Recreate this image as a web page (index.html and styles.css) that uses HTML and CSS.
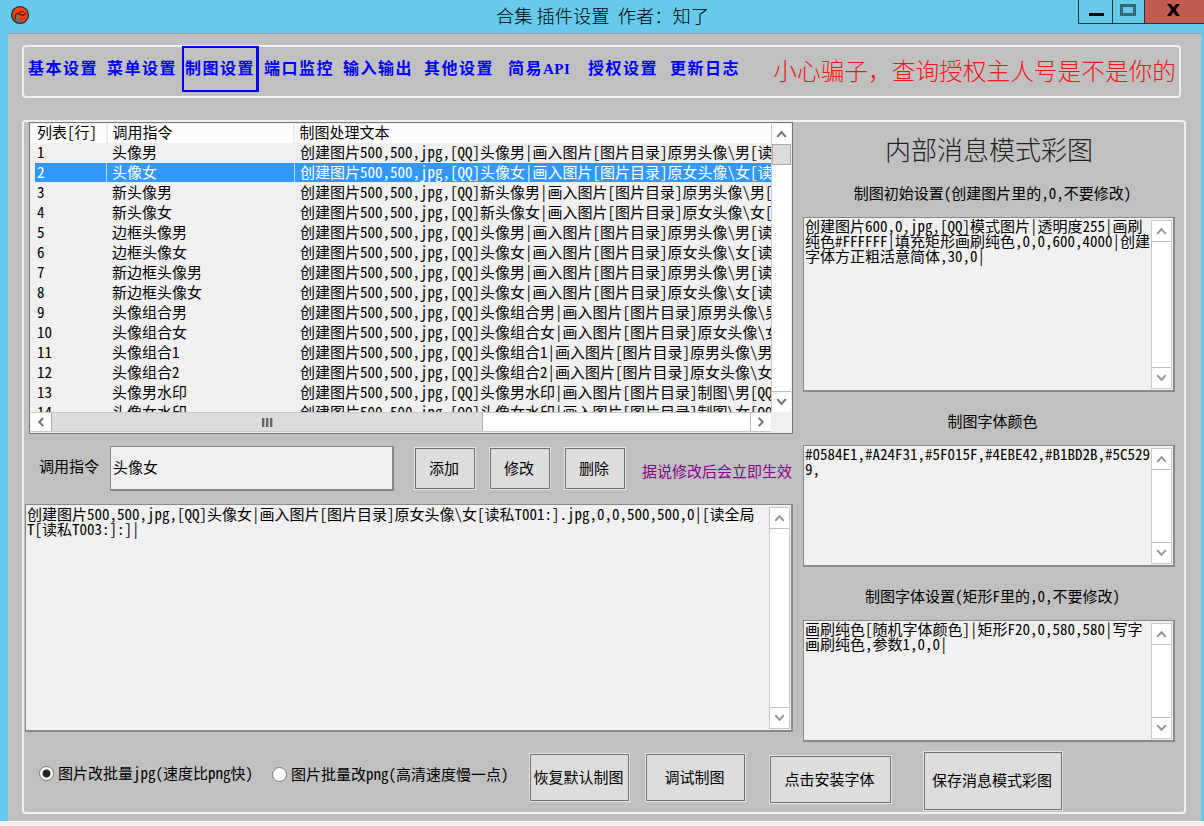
FILE: index.html
```html
<!DOCTYPE html>
<html lang="zh-CN">
<head>
<meta charset="utf-8">
<title>合集 插件设置</title>
<link rel="stylesheet" href="styles.css">
</head>
<body>
<svg width="0" height="0" class="defs">
  <symbol id="up" viewBox="0 0 20 20"><path d="M5.5 13 L10 8 L14.500 13" fill="none" stroke="currentColor" stroke-width="2"/></symbol>
  <symbol id="down" viewBox="0 0 20 20"><path d="M5.500 7 L10 12 L14.500 7" fill="none" stroke="currentColor" stroke-width="2"/></symbol>
  <symbol id="left" viewBox="0 0 20 20"><path d="M12.500 5.500 L8 10 L12.500 14.500" fill="none" stroke="currentColor" stroke-width="2"/></symbol>
  <symbol id="right" viewBox="0 0 20 20"><path d="M7.500 5.500 L12 10 L7.500 14.500" fill="none" stroke="currentColor" stroke-width="2"/></symbol>
</svg>
<div class="window">
  <header class="titlebar">
    <svg class="logo" viewBox="0 0 20 20" width="20" height="20">
      <circle cx="10" cy="10" r="8.400" fill="#74706a" stroke="#33282a" stroke-width="1.400"/>
      <path d="M3.800 14.500 C1.500 9 3.500 3 9 2.500 C13 2 17 4.500 17.500 8.500 C17.800 12.500 16 15.500 13 17.300 C11 16 9.200 14.500 9 12 L8.500 9.500 C6.500 9.500 5.500 11 6 13.500 Z" fill="#f5430b"/>
      <path d="M5.500 14.500 C4.500 11 5.500 8.500 8.500 8.500 L12.500 10.500 L16.500 8 M9 8.500 C9.500 6.500 12 5.500 13.500 7 M11.500 13.500 L12.500 14 M14.500 13.500 L15.200 13" fill="none" stroke="#3a1a16" stroke-width="1.100"/>
    </svg>
    <h1 class="title">合集 插件设置&nbsp; 作者<span class="colon">：</span>知了</h1>
    <div class="controls">
      <span class="ctl min"><i></i></span>
      <span class="ctl max"><i></i></span>
      <span class="ctl close"><svg viewBox="0 0 13 12" width="13" height="12"><path d="M0 0H4L6.500 3.300 9 0H13L8.600 5.700 13 12H9L6.500 8.300 4 12H0L4.400 5.700Z" fill="#000"/></svg></span>
    </div>
  </header>
  <main class="client">
    <nav class="group nav">
      <div class="tabs">
        <a>基本设置</a><a>菜单设置</a><a class="active">制图设置</a><a>端口监控</a><a>输入输出</a><a>其他设置</a><a>简易<b class="api">API</b></a><a>授权设置</a><a>更新日志</a>
      </div>
      <p class="warn">小心骗子，查询授权主人号是不是你的</p>
    </nav>
    <section class="group body">
      <div class="columns">
        <div class="leftcol">
          <div class="list">
            <div class="table">
              <div class="row head"><span>列表[行]</span><span>调用指令</span><span>制图处理文本</span></div>
              <div class="row"><span>1</span><span>头像男</span><span>创建图片500,500,jpg,[QQ]头像男|画入图片[图片目录]原男头像\男[读私</span></div>
              <div class="row sel"><span>2</span><span>头像女</span><span>创建图片500,500,jpg,[QQ]头像女|画入图片[图片目录]原女头像\女[读私</span></div>
              <div class="row"><span>3</span><span>新头像男</span><span>创建图片500,500,jpg,[QQ]新头像男|画入图片[图片目录]原男头像\男[读</span></div>
              <div class="row"><span>4</span><span>新头像女</span><span>创建图片500,500,jpg,[QQ]新头像女|画入图片[图片目录]原女头像\女[读</span></div>
              <div class="row"><span>5</span><span>边框头像男</span><span>创建图片500,500,jpg,[QQ]头像男|画入图片[图片目录]原男头像\男[读私</span></div>
              <div class="row"><span>6</span><span>边框头像女</span><span>创建图片500,500,jpg,[QQ]头像女|画入图片[图片目录]原女头像\女[读私</span></div>
              <div class="row"><span>7</span><span>新边框头像男</span><span>创建图片500,500,jpg,[QQ]头像男|画入图片[图片目录]原男头像\男[读私</span></div>
              <div class="row"><span>8</span><span>新边框头像女</span><span>创建图片500,500,jpg,[QQ]头像女|画入图片[图片目录]原女头像\女[读私</span></div>
              <div class="row"><span>9</span><span>头像组合男</span><span>创建图片500,500,jpg,[QQ]头像组合男|画入图片[图片目录]原男头像\男</span></div>
              <div class="row"><span>10</span><span>头像组合女</span><span>创建图片500,500,jpg,[QQ]头像组合女|画入图片[图片目录]原女头像\女</span></div>
              <div class="row"><span>11</span><span>头像组合1</span><span>创建图片500,500,jpg,[QQ]头像组合1|画入图片[图片目录]原男头像\男</span></div>
              <div class="row"><span>12</span><span>头像组合2</span><span>创建图片500,500,jpg,[QQ]头像组合2|画入图片[图片目录]原女头像\女</span></div>
              <div class="row"><span>13</span><span>头像男水印</span><span>创建图片500,500,jpg,[QQ]头像男水印|画入图片[图片目录]制图\男[QQ]</span></div>
              <div class="row"><span>14</span><span>头像女水印</span><span>创建图片500,500,jpg,[QQ]头像女水印|画入图片[图片目录]制图\女[QQ]</span></div>
            </div>
            <div class="vbar dark"><svg class="sb"><use href="#up"/></svg><div class="vthumb"></div><div class="track"></div><svg class="sb"><use href="#down"/></svg></div>
            <div class="hbar dark"><svg class="sb"><use href="#left"/></svg><div class="hthumb"><i></i><i></i><i></i></div><div class="track"></div><svg class="sb"><use href="#right"/></svg></div>
            <div class="corner"></div>
          </div>
          <div class="edit">
            <label>调用指令</label>
            <div class="input">头像女</div>
            <div class="btn small">添加</div>
            <div class="btn small">修改</div>
            <div class="btn small">删除</div>
            <span class="hint">据说修改后会立即生效</span>
          </div>
          <div class="area main"><div class="text">创建图片500,500,jpg,[QQ]头像女|画入图片[图片目录]原女头像\女[读私T001:].jpg,0,0,500,500,0|[读全局<br>T[读私T003:]:]|</div>
            <div class="vbar"><svg class="sb"><use href="#up"/></svg><div class="track"></div><svg class="sb"><use href="#down"/></svg></div></div>
        </div>
        <div class="rightcol">
          <h2>内部消息模式彩图</h2>
          <h3 class="l1">制图初始设置(创建图片里的,0,不要修改)</h3>
          <div class="area a1"><div class="text">创建图片600,0,jpg,[QQ]模式图片|透明度255|画刷<br>纯色#FFFFFF|填充矩形画刷纯色,0,0,600,4000|创建<br>字体方正粗活意简体,30,0|</div>
            <div class="vbar"><svg class="sb"><use href="#up"/></svg><div class="track"></div><svg class="sb"><use href="#down"/></svg></div></div>
          <h3 class="l2">制图字体颜色</h3>
          <div class="area a2"><div class="text">#0584E1,#A24F31,#5F015F,#4EBE42,#B1BD2B,#5C529<br>9,</div>
            <div class="vbar"><svg class="sb"><use href="#up"/></svg><div class="track"></div><svg class="sb"><use href="#down"/></svg></div></div>
          <h3 class="l3">制图字体设置(矩形F里的,0,不要修改)</h3>
          <div class="area a3"><div class="text">画刷纯色[随机字体颜色]|矩形F20,0,580,580|写字<br>画刷纯色,参数1,0,0|</div>
            <div class="vbar"><svg class="sb"><use href="#up"/></svg><div class="track"></div><svg class="sb"><use href="#down"/></svg></div></div>
        </div>
      </div>
      <div class="bottom">
        <div class="radio r1"><i class="on"></i>图片改批量jpg(速度比png快)</div>
        <div class="radio r2"><i></i>图片批量改png(高清速度慢一点)</div>
        <div class="btn b1">恢复默认制图</div>
        <div class="btn b2">调试制图</div>
        <div class="btn b3">点击安装字体</div>
        <div class="btn b4">保存消息模式彩图</div>
      </div>
    </section>
  </main>
</div>
</body>
</html>
```
FILE: styles.css
```css
* { box-sizing: border-box; }
body {
  margin: 0;
  width: 1204px;
  height: 826px;
  overflow: hidden;
  background: #f0f0f0;
  color: #000;
  font: 15px/20px "Noto Sans Mono CJK SC", "Noto Sans CJK SC", monospace;
}
h1, h2, h3, p { margin: 0; font-weight: 400; }
.defs { display: none; }
.window {
  height: 822px;
  padding: 0 3px 0 8px;
  background: #66caeb;
  border-bottom: 1px solid #fff;
}
.titlebar {
  display: grid;
  grid-template-columns: 1fr auto 1fr;
  height: 33px;
  margin-left: -8px;
  margin-right: -3px;
}
.logo { margin: 5px 0 0 10px; }
.title {
  padding-left: 1px;
  font: 300 18.300px/30px "Noto Sans CJK SC", sans-serif;
  white-space: nowrap;
}
.colon { font-family: "Noto Sans CJK TC", sans-serif; }
.controls { display: flex; justify-content: flex-end; height: 24px; }
.ctl {
  display: flex;
  justify-content: center;
  border: 1px solid #2b333b;
  border-top: 0;
  border-right: 0;
}
.min { width: 34px; }
.min i { width: 15px; height: 3px; margin: 13px 0 0 2px; background: #000; }
.max { width: 32px; }
.max i { width: 16px; height: 12px; margin: 4px 2px 0 0; border: 3px solid #356776; }
.close { width: 60px; background: #c45b50; padding-right: 3px; }
.close svg { margin-top: 4px; }
.client {
  height: 788px;
  padding: 11px 0 0 14px;
  background: #c0c0c0;
  border-top: 1px solid #94a0a8;
}
.group { border: 2px solid #edf1f3; border-radius: 4px; }
.nav {
  display: flex;
  justify-content: space-between;
  width: 1159px;
  height: 53px;
}
.tabs { display: flex; height: 46px; }
.tabs a {
  width: 76px;
  margin-right: 3px;
  padding-left: 3px;
  color: #00f;
  font-size: 16px;
  font-weight: 700;
  line-height: 40px;
  letter-spacing: 1.500px;
  white-space: nowrap;
}
.tabs a:nth-child(1) { margin-left: 1px; }
.tabs a.active {
  margin: -1px 1px 0 -1px;
  padding-left: 1px;
  line-height: 38px;
  border: 2px solid #00f;
  border-right-width: 3px;
  height: 46px;
  width: 77px;
}
.tabs a:nth-child(4) { margin-left: 1px; }
.tabs a:nth-child(5) { margin-right: 5px; }
.tabs a:nth-child(6) { margin-right: 8px; }
.tabs a:nth-child(7) { margin-right: 4px; }
.tabs a:nth-child(8) { margin-right: 6px; }
.api { font: 700 15px "Liberation Serif", serif; letter-spacing: 0.500px; }
.warn {
  padding-right: 3px;
  color: #f51313;
  font-family: "Noto Sans CJK SC", sans-serif;
  font-size: 23.700px;
  font-weight: 300;
  line-height: 46px;
  white-space: nowrap;
}
.body { width: 1164px; height: 694px; margin-top: 22px; }
.columns { display: flex; gap: 10px; height: 620px; padding-left: 1px; }
.leftcol { width: 768px; }
.list {
  display: grid;
  grid-template: 288px 20px / 740px 20px;
  width: 764px;
  height: 312px;
  margin-left: 4px;
  padding: 1px;
  border: 1px solid #777;
  background: #f0f0f0;
}
.table { overflow: hidden; }
.row {
  display: grid;
  grid-template-columns: 75px 188px 477px;
  height: 20px;
  padding: 0 0 0 5px;
  line-height: 16px;
  white-space: pre;
}
.row span { padding-left: 1px; }
.row:not(.head) span { overflow: hidden; }
.head { height: 19px; margin-bottom: 1px; padding: 0; background: #fcfcfc; grid-template-columns: 75px 187px 478px; }
.head span { padding-left: 6px; }
.head span + span { padding-left: 4.500px; border-left: 2px solid #eaeaea; }
.sel {
  grid-template-columns: 71px 188px 478px;
  color: #fff;
  padding: 0 0 0 4px;
  margin-top: -1px;
  margin-bottom: 1px;
  border-bottom: 1px solid #f0f0f0;
}
.sel span { background: #3398fe; padding: 1px 0 0 2px; }
.sel span + span { padding-left: 5px; border-left: 1px solid #b8dcff; }
.vbar {
  display: flex;
  flex-direction: column;
  width: 21px;
  border: 1px solid #c8c8c8;
  background: #fff;
  color: #929292;
}
.dark { color: #6a6a6a; }
.list .vbar { width: 20px; border-width: 0 0 0 1px; }
.sb { flex: none; width: 19px; height: 20px; }
.track { flex: 1; border: solid #bcbcbc; border-width: 1px 0; }
.vthumb { height: 21px; background: #dcdcdc; border: 1px solid #aaa; }
.list .vbar .track { border-top: 0; }
.hbar { display: flex; background: #fff; border: 1px solid #c8c8c8; border-width: 1px 0; }
.hbar .sb { width: 20px; height: 18px; }
.hthumb {
  display: flex;
  align-items: center;
  justify-content: center;
  gap: 1px;
  width: 432px;
  background: #dcdcdc;
  border: solid #aaa;
  border-width: 0 1px;
}
.hthumb i { width: 3px; height: 9px; background: #666; border-right: 1px solid #aaa; }
.hbar .track { border-width: 0 1px 0 0; }
.edit { display: flex; height: 70px; padding: 12px 0 0 14px; }
.edit label { width: 71px; line-height: 40px; }
.input {
  width: 284px;
  height: 45px;
  padding-left: 2px;
  border: 2px solid #858585;
  border-width: 1px 2px 2px 1px;
  background: #f0f0f0;
  line-height: 40px;
}
.btn {
  display: flex;
  align-items: center;
  justify-content: center;
  padding: 0 2px 2px 0;
  background: #ddd;
  border: 1px solid #707070;
  outline: 1px solid #e6e6e6;
  white-space: nowrap;
}
.small { width: 60px; height: 41px; margin: 2px 0 0 15px; }
.small:nth-child(3) { margin-left: 21px; }
.hint { margin-left: 17px; color: #8b008b; line-height: 49px; white-space: nowrap; }
.area {
  display: flex;
  justify-content: space-between;
  border: 2px solid #8a8a8a;
  border-width: 1px 2px 2px 1px;
  background: #f0f0f0;
  line-height: 15px;
  padding: 2px 1px 1px 1px;
}
.text { white-space: nowrap; width: 0; margin-top: -2px; }
.main { height: 228px; }
.main .text { margin-top: -1px; }
.rightcol { width: 372px; }
.rightcol h2 {
  font-family: "Noto Sans CJK SC", sans-serif;
  font-size: 26px;
  font-weight: 300;
  line-height: 42px;
  height: 50px;
  padding-top: 6px;
  text-align: center;
  color: #222;
}
.rightcol h3 { font-size: 15px; text-align: center; white-space: nowrap; padding-left: 7px; }
.rightcol .l1 { height: 45px; line-height: 42px; }
.a1 { height: 175px; }
.l2 { height: 53px; line-height: 58px; }
.a2 { height: 122px; }
.l3 { height: 53px; line-height: 58px; }
.a3 { height: 122px; }
.bottom { display: flex; padding-left: 15px; height: 69px; }
.radio { display: flex; gap: 4px; height: 20px; line-height: 18px; white-space: nowrap; }
.radio i {
  display: flex;
  width: 15px;
  height: 15px;
  margin-top: 2px;
  border: 1px solid #777;
  border-radius: 50%;
  background: #fff;
}
.radio .on { background: radial-gradient(circle, #222 0 3.500px, #fff 4.500px); }
.r1 { width: 233px; margin-top: 22px; }
.r2 { width: 258px; margin-top: 23px; }
.b1 { width: 99px; height: 47px; margin: 12px 0 0 0; }
.b2 { width: 99px; height: 47px; margin: 12px 0 0 17px; }
.b3 { width: 121px; height: 47px; margin: 14px 0 0 25px; }
.b4 { width: 138px; height: 58px; margin: 10px 0 0 33px; }
```
